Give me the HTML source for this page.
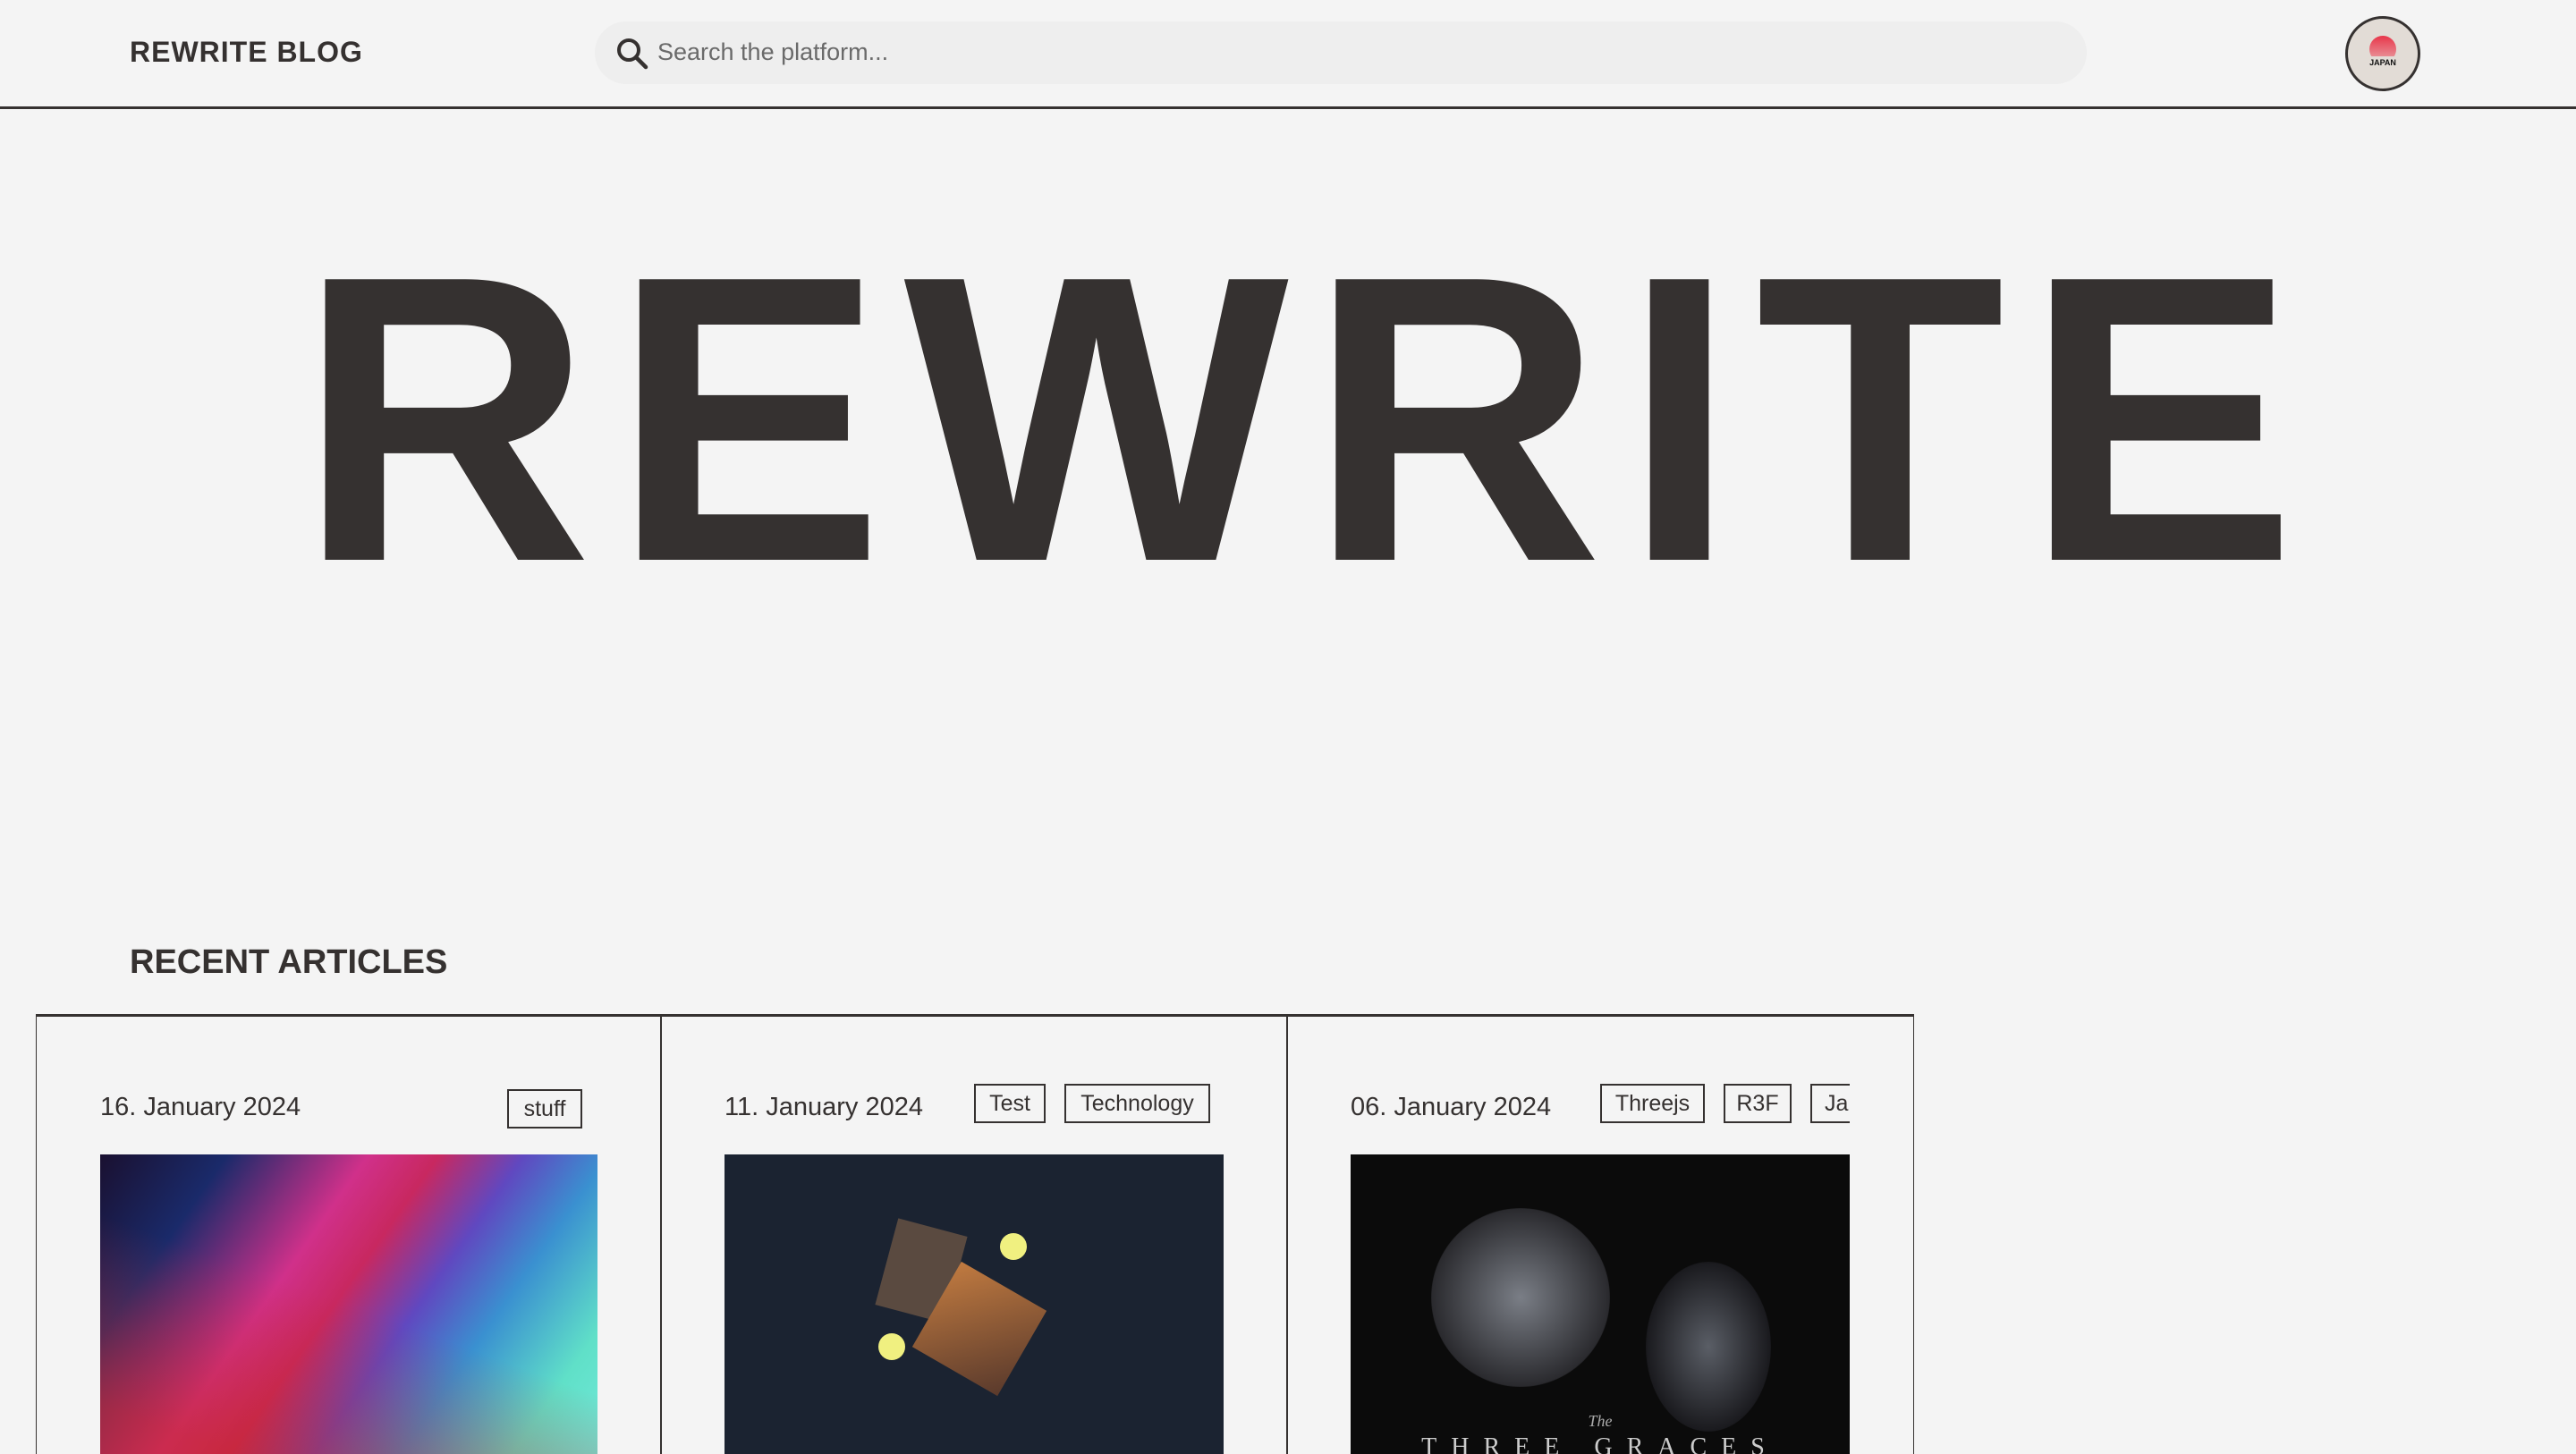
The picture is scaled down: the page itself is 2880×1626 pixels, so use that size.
<!DOCTYPE html>
<html style="width:2880px;height:1626px;overflow:hidden"><head><meta charset="utf-8"><style>
*{margin:0;padding:0;box-sizing:border-box}
body{width:2880px;height:1626px;overflow:hidden;background:#f4f4f4;font-family:"Liberation Sans",sans-serif;color:#353130;position:relative}
.hdr{position:absolute;left:0;top:0;width:2880px;height:122px;border-bottom:3px solid #353130}
.logo{position:absolute;left:145px;top:40px;font-size:32px;font-weight:bold;letter-spacing:1px}
.search{position:absolute;left:665px;top:24px;width:1668px;height:70px;border-radius:35px;background:#eeeeee}
.search span{position:absolute;left:70px;top:19px;font-size:27px;color:#6a6a6a}
.av{position:absolute;left:2622px;top:18px;width:84px;height:84px;border-radius:50%;background:#e2dcd6;border:3px solid #353130;overflow:hidden}
.big{position:absolute;left:333px;top:208px;font-size:456px;font-weight:bold;letter-spacing:22px;line-height:520px;color:#353130;white-space:nowrap}
.ra{position:absolute;left:145px;top:1055px;font-size:38px;font-weight:bold}
.cards{position:absolute;left:40px;top:1134px;width:2100px;height:492px;border-top:3px solid #353130;border-left:1.5px solid #353130;border-right:1.5px solid #353130}
.col{position:absolute;top:1137px;width:1.5px;height:489px;background:#353130}
.date{position:absolute;font-size:29px;color:#353130;font-weight:300;top:1222px}
.tag{position:absolute;border:2px solid #353130;font-size:25px;height:44px;line-height:40px;text-align:center;overflow:hidden;white-space:nowrap}
.img{position:absolute;top:1291px;height:335px;overflow:hidden}
</style></head><body>
<div class="hdr">
<div class="logo">REWRITE BLOG</div>
<div class="search">
<svg style="position:absolute;left:22px;top:16px" width="40" height="40" viewBox="0 0 40 40"><circle cx="16" cy="16" r="11" fill="none" stroke="#353130" stroke-width="4"/><line x1="24" y1="24" x2="35" y2="35" stroke="#353130" stroke-width="4.5" stroke-linecap="round"/></svg>
<span>Search the platform...</span></div>
<div class="av"><svg width="84" height="84" viewBox="0 0 84 84" style="position:absolute;left:-3px;top:-3px"><defs><linearGradient id="s" x1="0" y1="0" x2="0" y2="1"><stop offset="0" stop-color="#e8364a"/><stop offset="1" stop-color="#e9a4a8"/></linearGradient><clipPath id="c"><rect x="0" y="0" width="84" height="45"/></clipPath></defs><circle cx="42" cy="37" r="15" fill="url(#s)" clip-path="url(#c)"/><text x="42" y="55" text-anchor="middle" font-family="Liberation Sans" font-weight="bold" font-size="9" fill="#111">JAPAN</text></svg></div>
</div>
<div class="big">REWRITE</div>
<div class="ra">RECENT ARTICLES</div>
<div class="cards"></div>
<div class="col" style="left:738px"></div>
<div class="col" style="left:1438px"></div>
<div class="date" style="left:112px">16. January 2024</div>
<div class="tag" style="left:567px;top:1218px;width:84px">stuff</div>
<div class="date" style="left:810px">11. January 2024</div>
<div class="tag" style="left:1089px;top:1212px;width:80px">Test</div>
<div class="tag" style="left:1190px;top:1212px;width:163px">Technology</div>
<div class="date" style="left:1510px">06. January 2024</div>
<div class="tag" style="left:1789px;top:1212px;width:117px">Threejs</div>
<div class="tag" style="left:1927px;top:1212px;width:76px">R3F</div>
<div class="tag" style="left:2024px;top:1212px;width:44px;border-right:none;text-align:left;padding-left:14px">Ja</div>
<div class="img" style="left:112px;width:556px;background:linear-gradient(125deg,#1a1030 0%,#1a2a6a 18%,#d0308a 38%,#c82860 48%,#6048c0 60%,#3a90d0 72%,#60e0c8 88%,#70e8d8 100%)"><div style="position:absolute;inset:0;background:linear-gradient(200deg,rgba(0,0,0,0) 50%,rgba(200,40,40,.6) 90%)"></div></div>
<div class="img" style="left:810px;width:558px;background:#1b2331">
<div style="position:absolute;left:180px;top:80px;width:80px;height:100px;background:#5a4a40;transform:rotate(15deg)"></div>
<div style="position:absolute;left:230px;top:140px;width:110px;height:110px;background:linear-gradient(135deg,#c07a40,#5a3a2c);transform:rotate(30deg)"></div>
<div style="position:absolute;left:308px;top:88px;width:30px;height:30px;border-radius:50%;background:#f0f080"></div>
<div style="position:absolute;left:172px;top:200px;width:30px;height:30px;border-radius:50%;background:#f0f080"></div>
</div>
<div class="img" style="left:1510px;width:558px;background:#0b0b0b">
<div style="position:absolute;left:90px;top:60px;width:200px;height:200px;border-radius:50%;background:radial-gradient(#7a7e86,#2a2a2e 70%,transparent 72%)"></div>
<div style="position:absolute;left:330px;top:120px;width:140px;height:190px;border-radius:50%;background:radial-gradient(#5a5e66,#1a1a1e 70%,transparent 72%)"></div>
<div style="position:absolute;left:0;top:288px;width:558px;text-align:center;font-family:'Liberation Serif',serif;font-style:italic;color:#aaa;font-size:18px">The</div>
<div style="position:absolute;left:0;top:312px;width:558px;text-align:center;font-family:'Liberation Serif',serif;color:#ccc;font-size:28px;letter-spacing:16px">THREE GRACES</div>
</div>
</body></html>
